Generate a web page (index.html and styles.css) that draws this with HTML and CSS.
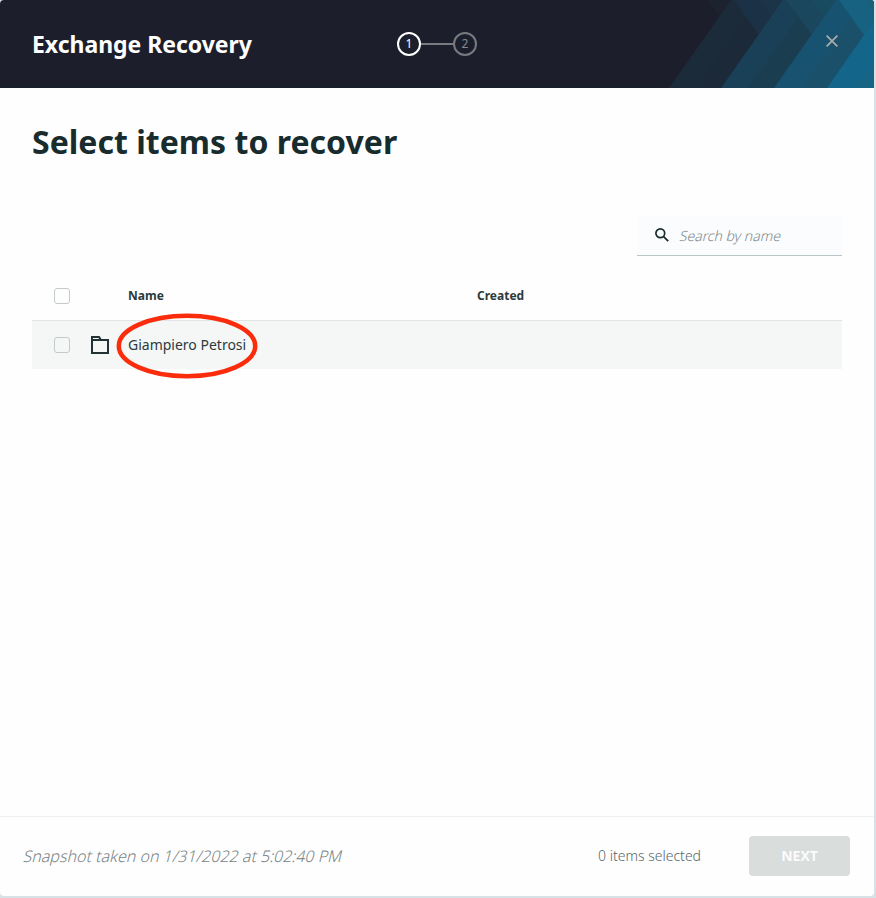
FILE: index.html
```html
<!DOCTYPE html>
<html lang="en">
<head>
<meta charset="utf-8">
<title>Exchange Recovery</title>
<link rel="stylesheet" href="styles.css">
</head>
<body>
<div class="dialog">
  <header class="header">
    <svg class="pattern" viewBox="0 0 218 88" width="218" height="88" aria-hidden="true">
      <path fill="#1c1f2b" d="M0 0H218V88H0z"/>
      <path fill="#1c222e" d="M52 0H77L64 17z"/>
      <path fill="#1b2b39" d="M13 88L75 0H160L119 88z"/>
      <path fill="#1c2938" d="M40 88L91 17L130 20L119 88z"/>
      <path fill="#1b3145" d="M78 0H129L103 35z"/>
      <path fill="#1b3448" d="M104 0H129L115 17z"/>
      <path fill="#1a4058" d="M65 88L127 0H200L172 88z"/>
      <path fill="#1b3d50" d="M92 88L143 17L180 20L172 88z"/>
      <path fill="#1a475e" d="M130 0H184L156 35z"/>
      <path fill="#194b60" d="M156 0H184L168 17z"/>
      <path fill="#175370" d="M118 88L180 0H218V88z"/>
      <path fill="#1a5069" d="M145 88L195 18L218 30V88z"/>
      <path fill="#166280" d="M183 0H218V22L208 35z"/>
      <path fill="#196078" d="M209 0H218V13z"/>
      <path fill="#14658a" d="M171 88L208 35L218 21V88z"/>
      <path fill="#176485" d="M199 88L218 60V88z"/>
    </svg>
    <div class="title">Exchange Recovery</div>
    <div class="steps"><span class="step active">1</span><span class="line"></span><span class="step">2</span></div>
    <svg class="close" viewBox="0 0 12 12" width="12" height="12"><path d="M.6.6L11.4 11.4M11.4.6L.6 11.4"/></svg>
  </header>
  <main class="main">
    <h1 class="heading">Select items to recover</h1>
    <label class="search">
      <svg viewBox="0 0 14 14" width="14" height="14"><circle cx="5.3" cy="5.3" r="4.4"/><path d="M8.4 8.4L13.2 13.2"/></svg>
      <span class="placeholder">Search by name</span>
    </label>
    <div class="table">
      <div class="row head"><span class="check"></span><span></span><span class="cell">Name</span><span class="cell">Created</span></div>
      <div class="row item">
        <span class="check"></span>
        <svg class="folder" viewBox="0 0 20 20" width="20" height="20"><path d="M2 18V2H9L11 5H18V18z"/><path d="M2 5H11"/></svg>
        <span class="cell name">Giampiero Petrosi<svg class="mark" viewBox="0 0 142 66" width="142" height="66"><ellipse cx="71" cy="33" rx="68.2" ry="30.2"/></svg></span>
        <span></span>
      </div>
    </div>
  </main>
  <footer class="footer">
    <span class="snapshot">Snapshot taken on 1/31/2022 at 5:02:40 PM</span>
    <span class="count">0 items selected</span>
    <button class="next">NEXT</button>
  </footer>
</div>
</body>
</html>
```
FILE: styles.css
```css
* { box-sizing: border-box; }
body { margin: 0; height: 898px; background: #d7e2e6; font-family: "Noto Sans", "Open Sans", sans-serif; color: #2b3a3c; }
.dialog { width: 874px; height: 896px; display: flex; flex-direction: column; background: #fefefe; border-radius: 4px; overflow: hidden; }
.header { position: relative; height: 88px; flex: none; padding-left: 32px; display: flex; align-items: center; background: #1c1f2b; border-bottom: 1px solid #18202b; }
.pattern { position: absolute; right: 0; top: 0; }
.title { width: 365px; font: 700 23px/30px "Noto Sans", sans-serif; letter-spacing: -.03px; color: #fff; white-space: nowrap; }
.steps { display: flex; align-items: center; }
.step { width: 24px; height: 24px; border: 2px solid #777b80; border-radius: 50%; font-size: 12px; line-height: 20px; text-align: center; color: #85898d; }
.step.active { border-color: #fff; color: #fff; }
.line { width: 32px; height: 2px; background: #777b80; }
.close { position: relative; margin: 0 36px 6px auto; fill: none; stroke: #aaa9aa; stroke-width: 1.8; }
.main { flex: 1; padding: 32px 32px 0; display: flex; flex-direction: column; }
.heading { margin: 0; font-size: 32px; line-height: 44px; letter-spacing: .02px; color: #182b2d; }
.search { align-self: flex-end; margin-top: 52px; width: 205px; height: 40px; padding-left: 18px; display: flex; align-items: center; gap: 11px; background: #fbfcfe; border-bottom: 1px solid #b9c5c7; border-radius: 4px 4px 0 0; }
.search svg { margin-bottom: 2px; fill: none; stroke: #182b2d; stroke-width: 1.7; }
.placeholder { font: 300 14px/20px "Noto Sans", sans-serif; transform: skewX(-14deg); color: #7d8a8b; }
.table { width: 810px; margin-top: 16px; }
.row { display: grid; grid-template-columns: 58px 38px 349px 1fr; align-items: center; height: 48px; }
.head { height: 49px; border-bottom: 1px solid #e1e5e5; font-size: 12px; font-weight: 700; }
.head .cell { padding-bottom: 2px; }
.item { background: #f5f7f7; font-size: 14px; }
.check { width: 16px; height: 16px; margin-left: 22px; border: 1px solid #c3caca; border-radius: 3px; background: #fefefe; }
.item .check { background: #f5f7f7; }
.folder { fill: none; stroke: #213335; stroke-width: 2; }
.name { position: relative; justify-self: start; padding-bottom: 2px; }
.mark { position: absolute; left: -12px; top: -22px; fill: none; stroke: #fb2c0c; stroke-width: 4.5; }
.footer { height: 80px; flex: none; padding: 0 24px 2px; display: flex; align-items: center; border-top: 1px solid #f0f1f1; }
.snapshot { font: 300 16px/22px "Noto Sans", sans-serif; transform: skewX(-14deg); color: #788384; }
.count { margin-left: auto; font: 300 14px/20px "Noto Sans", sans-serif; color: #566769; }
.next { width: 101px; height: 40px; margin-left: 48px; padding: 0; border: 0; border-radius: 4px; background: #d9dddc; color: #fbfcfc; font: 700 14px "Open Sans", sans-serif; }
```
